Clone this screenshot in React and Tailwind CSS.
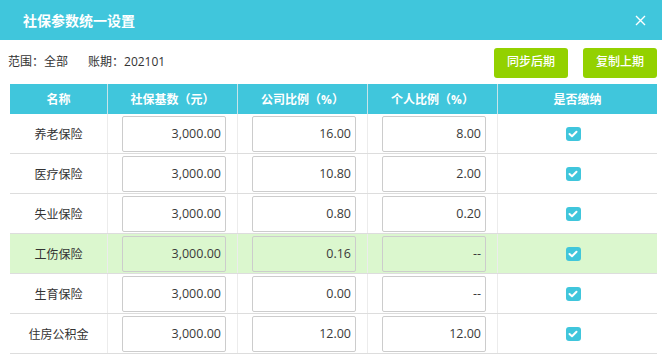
import React from 'react';

const rows = [
  { name: '养老保险', base: '3,000.00', company: '16.00', personal: '8.00' },
  { name: '医疗保险', base: '3,000.00', company: '10.80', personal: '2.00' },
  { name: '失业保险', base: '3,000.00', company: '0.80', personal: '0.20' },
  { name: '工伤保险', base: '3,000.00', company: '0.16', personal: '--', active: true },
  { name: '生育保险', base: '3,000.00', company: '0.00', personal: '--' },
  { name: '住房公积金', base: '3,000.00', company: '12.00', personal: '12.00' },
];

const grid = 'grid grid-cols-[98px_130px_130px_130px_159px]';

const Cell = ({ value }) => (
  <div className="flex items-center pl-[14px] border-r border-[#ececec]">
    <div className="w-[104px] h-[36px] border border-[#cccccc] rounded-[2px] flex items-center justify-end pr-[4px] pt-[1px] text-[12.5px] text-[#3a3a3a]">
      {value}
    </div>
  </div>
);

const Check = () => (
  <div className="w-[15px] h-[14px] rounded-[3px] bg-[#40c6dc] flex items-center justify-center">
    <svg width="10" height="8" viewBox="0 0 10 8" fill="none">
      <path d="M1.5 4 L4 6.3 L8.5 1.7" stroke="white" strokeWidth="2" strokeLinecap="round" strokeLinejoin="round" />
    </svg>
  </div>
);

export default function App() {
  return (
    <div className="w-[662px] h-[355px] bg-white overflow-hidden" style={{ fontFamily: '"Open Sans", "Noto Sans CJK SC", sans-serif' }}>
      {/* title bar */}
      <div className="h-[40px] bg-[#40c6dc] flex items-center justify-between pl-[23px] pr-[16px]">
        <span className="text-white text-[14px] font-bold">社保参数统一设置</span>
        <svg width="11" height="11" viewBox="0 0 11 11">
          <path d="M1 1 L10 10 M10 1 L1 10" stroke="white" strokeWidth="1.4" />
        </svg>
      </div>

      {/* info + actions */}
      <div className="h-[44px] flex items-center justify-between pl-[8px] pr-[5px] pt-[1px]">
        <div className="text-[12px] text-[#333] flex gap-[20px] -mt-[1px]">
          <span>范围：全部</span>
          <span>账期：202101</span>
        </div>
        <div className="flex gap-[15px]">
          <button className="w-[74px] h-[30px] rounded-[3px] bg-[#93d100] text-white text-[12px] font-medium pb-[1px]">同步后期</button>
          <button className="w-[74px] h-[30px] rounded-[3px] bg-[#93d100] text-white text-[12px] font-medium pb-[1px]">复制上期</button>
        </div>
      </div>

      {/* table */}
      <div className="ml-[10px] mr-[5px]">
        <div className={`${grid} h-[30px] bg-[#40c6dc] text-white text-[12px] font-bold`}>
          {['名称', '社保基数（元）', '公司比例（%）', '个人比例（%）', '是否缴纳'].map((h, i) => (
            <div key={h} className={`flex items-center justify-center pt-[1px] ${i < 4 ? 'border-r border-[#c9e4ea]' : ''}`}>{h}</div>
          ))}
        </div>
        {rows.map((r) => (
          <div key={r.name} className={`${grid} h-[40px] border-b border-[#dddddd] ${r.active ? 'bg-[#dbf7ce]' : ''}`}>
            <div className="flex items-center justify-center pt-[2px] text-[12px] text-[#333] border-r border-[#ececec]">{r.name}</div>
            <Cell value={r.base} />
            <Cell value={r.company} />
            <Cell value={r.personal} />
            <div className="flex items-center justify-center pr-[9px]">
              <Check />
            </div>
          </div>
        ))}
      </div>
    </div>
  );
}
